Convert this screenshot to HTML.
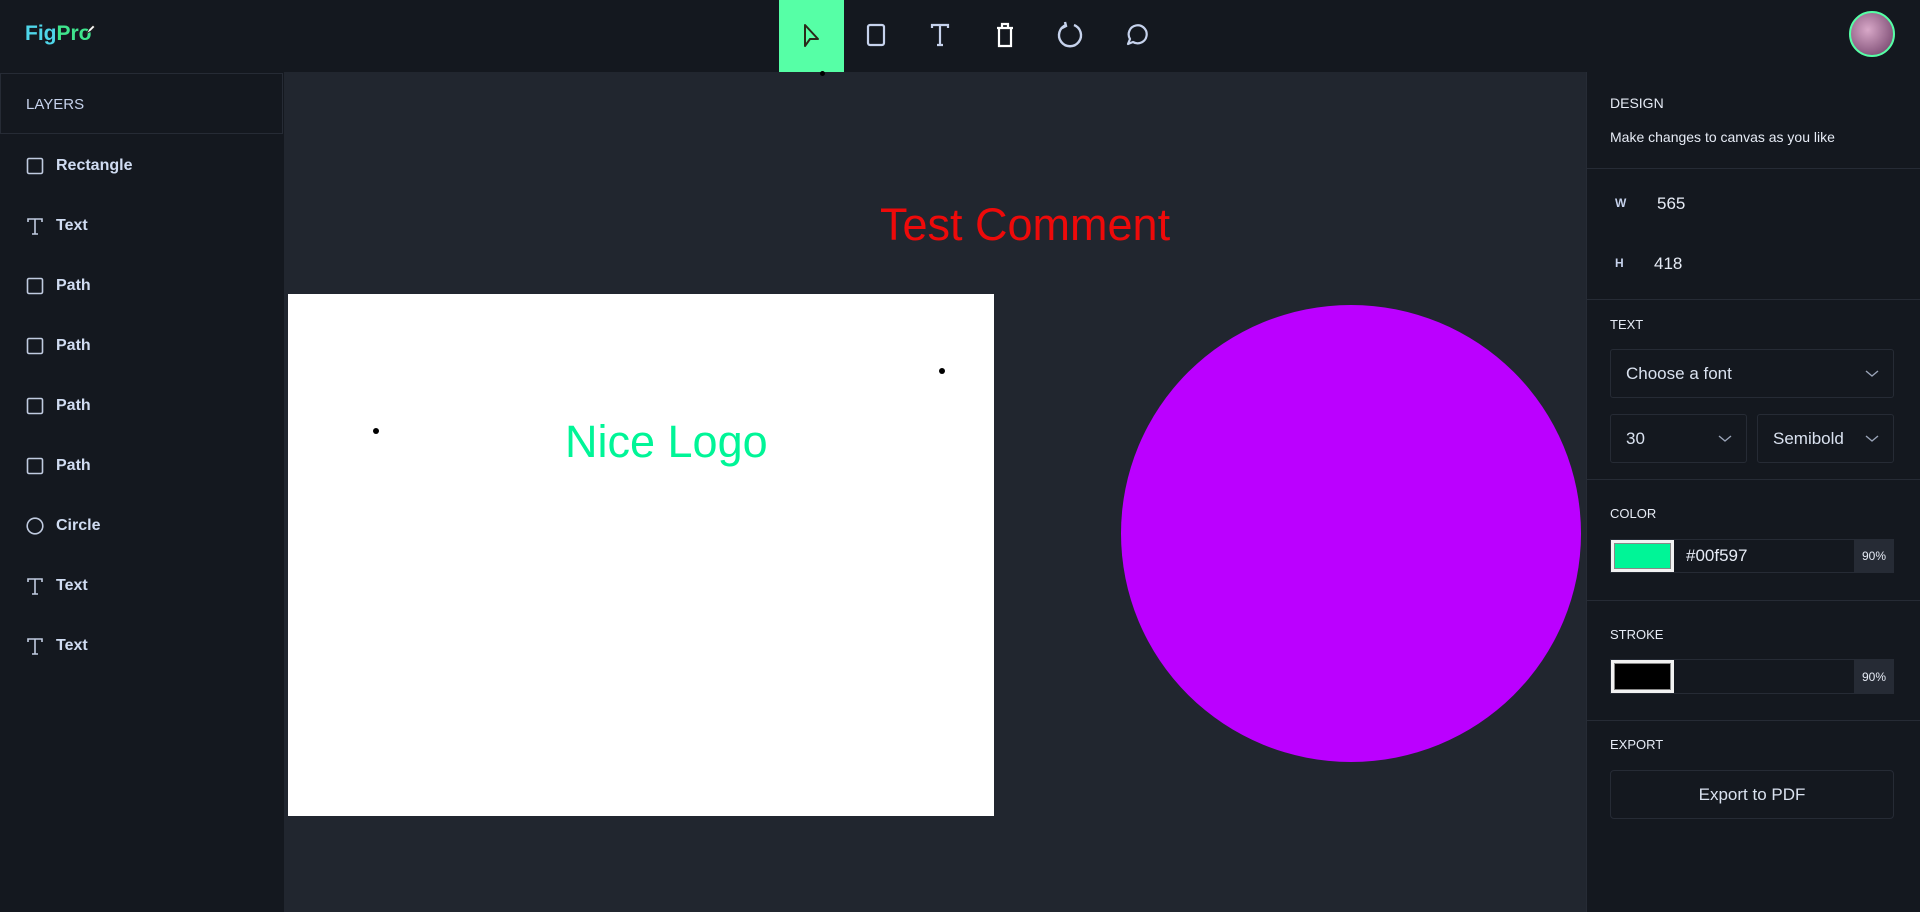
<!DOCTYPE html>
<html><head><meta charset="utf-8"><style>
*{margin:0;padding:0;box-sizing:border-box}
body{width:1920px;height:912px;overflow:hidden;background:#21262f;font-family:"Liberation Sans",Arial,sans-serif;position:relative}
.top{position:absolute;left:0;top:0;width:1920px;height:72px;background:#14181f}
.left{position:absolute;left:0;top:72px;width:284px;height:840px;background:#14181f}
.right{position:absolute;left:1586px;top:72px;width:334px;height:840px;background:#14181f}
.abs{position:absolute}
.lay{position:absolute;left:0;height:60px;display:flex;align-items:center;color:#d0dcf2;font-weight:bold;font-size:16px}
.lay svg{margin-left:26px;margin-right:12px}
.lbl{position:absolute;left:24px;color:#e6ebf5;font-size:13px}
.div{position:absolute;left:0;width:334px;height:1px;background:#262b35}
.sel{position:absolute;border:1px solid #262b35;border-radius:3px;color:#d9e1ef;font-size:17px;display:flex;align-items:center;padding-left:15px}
.sel svg{position:absolute;right:14px}
</style></head><body>
<div class="top">
  <div class="abs" style="left:25px;top:22px;font-size:21px;font-weight:bold;letter-spacing:0"><span style="color:#4fd6ea">Fig</span><span style="color:#3fe58d">Pro</span></div>
  <svg class="abs" style="left:84px;top:22px" width="14" height="14" viewBox="0 0 14 14"><path d="M2 12 L5 7 L9 3 L11 5 L7 9 Z" fill="#fff" stroke="#222" stroke-width="1"/></svg>
  <div class="abs" style="left:779px;top:0;width:65px;height:72px;background:#56ffa6"></div>
  <svg class="abs" style="left:800px;top:22px" width="24" height="28" viewBox="0 0 24 28"><path d="M5 3 L5 24 L10 17 L18 17 Z" fill="none" stroke="#2a2a1a" stroke-width="2" stroke-linejoin="round"/></svg>
  <svg class="abs" style="left:864px;top:22px" width="24" height="26" viewBox="0 0 24 26"><rect x="4" y="3" width="16" height="20" rx="2" fill="none" stroke="#c6d2ec" stroke-width="2.2"/></svg>
  <svg class="abs" style="left:928px;top:22px" width="24" height="26" viewBox="0 0 24 26"><path d="M4 6V3H20V6M12 3V23M9 23H15" fill="none" stroke="#c6d2ec" stroke-width="2.2"/></svg>
  <svg class="abs" style="left:993px;top:21px" width="24" height="28" viewBox="0 0 24 28"><path d="M4 7H20M9 7V3H15V7M6 7V25H18V7" fill="none" stroke="#fff" stroke-width="2.2"/></svg>
  <svg class="abs" style="left:1056px;top:20px" width="28" height="30" viewBox="0 0 28 30"><path d="M10 5 A11 11 0 1 0 18 5" fill="none" stroke="#c6d2ec" stroke-width="2.4"/><path d="M9 2 L10 6 L6 8" fill="none" stroke="#c6d2ec" stroke-width="2.4"/></svg>
  <svg class="abs" style="left:1123px;top:22px" width="26" height="26" viewBox="0 0 26 26"><path d="M5 22 L7 17 A9 9 0 1 1 10 20 Z" fill="none" stroke="#c6d2ec" stroke-width="2.2" stroke-linejoin="round"/></svg>
  <div class="abs" style="left:820px;top:71px;width:5px;height:5px;border-radius:50%;background:#000"></div>
  <div class="abs" style="left:1849px;top:11px;width:46px;height:46px;border-radius:50%;border:2px solid #56ffa6;background:radial-gradient(circle at 40% 40%,#d8a8c8,#8a5a80 70%,#5a3a5a)"></div>
</div>
<div class="left">
  <div class="abs" style="left:0;top:1px;width:283px;height:61px;border:1px solid #262b35;background:#14181f"></div>
  <div class="abs" style="left:26px;top:24px;color:#c6d2ec;font-size:15px">LAYERS</div>
  <div class="lay" style="top:64px"><svg width="18" height="18"><rect x="1.5" y="1.5" width="15" height="15" rx="1.5" fill="none" stroke="#c0cbe0" stroke-width="1.6"/></svg>Rectangle</div>
  <div class="lay" style="top:124px"><svg width="18" height="18"><path d="M2 5V2H16V5M9 2V17M6 17H12" fill="none" stroke="#c0cbe0" stroke-width="1.6"/></svg>Text</div>
  <div class="lay" style="top:184px"><svg width="18" height="18"><rect x="1.5" y="1.5" width="15" height="15" rx="1.5" fill="none" stroke="#c0cbe0" stroke-width="1.6"/></svg>Path</div>
  <div class="lay" style="top:244px"><svg width="18" height="18"><rect x="1.5" y="1.5" width="15" height="15" rx="1.5" fill="none" stroke="#c0cbe0" stroke-width="1.6"/></svg>Path</div>
  <div class="lay" style="top:304px"><svg width="18" height="18"><rect x="1.5" y="1.5" width="15" height="15" rx="1.5" fill="none" stroke="#c0cbe0" stroke-width="1.6"/></svg>Path</div>
  <div class="lay" style="top:364px"><svg width="18" height="18"><rect x="1.5" y="1.5" width="15" height="15" rx="1.5" fill="none" stroke="#c0cbe0" stroke-width="1.6"/></svg>Path</div>
  <div class="lay" style="top:424px"><svg width="18" height="18"><circle cx="9" cy="9" r="7.8" fill="none" stroke="#c0cbe0" stroke-width="1.6"/></svg>Circle</div>
  <div class="lay" style="top:484px"><svg width="18" height="18"><path d="M2 5V2H16V5M9 2V17M6 17H12" fill="none" stroke="#c0cbe0" stroke-width="1.6"/></svg>Text</div>
  <div class="lay" style="top:544px"><svg width="18" height="18"><path d="M2 5V2H16V5M9 2V17M6 17H12" fill="none" stroke="#c0cbe0" stroke-width="1.6"/></svg>Text</div>
</div>
<div class="abs" style="left:880px;top:199px;color:#ee0a0a;font-size:45px;white-space:nowrap">Test Comment</div>
<div class="abs" style="left:288px;top:294px;width:706px;height:522px;background:#fff"></div>
<div class="abs" style="left:565px;top:416px;color:#00f597;font-size:45px;white-space:nowrap">Nice Logo</div>
<div class="abs" style="left:373px;top:428px;width:6px;height:6px;border-radius:50%;background:#000"></div>
<div class="abs" style="left:939px;top:368px;width:6px;height:6px;border-radius:50%;background:#000"></div>
<div class="abs" style="left:1121px;top:305px;width:460px;height:457px;border-radius:50%;background:#bb00ff"></div>
<div class="right">
  <div class="abs" style="left:0;top:0;width:1px;height:840px;background:#262b35"></div>
  <div class="lbl" style="top:23px;font-size:14px">DESIGN</div>
  <div class="lbl" style="top:57px;font-size:14px">Make changes to canvas as you like</div>
  <div class="div" style="top:96px"></div>
  <div class="lbl" style="left:29px;top:124px;font-size:12px;font-weight:bold;color:#c6d2ec">W</div>
  <div class="lbl" style="left:71px;top:122px;font-size:17px">565</div>
  <div class="lbl" style="left:29px;top:184px;font-size:12px;font-weight:bold;color:#c6d2ec">H</div>
  <div class="lbl" style="left:68px;top:182px;font-size:17px">418</div>
  <div class="div" style="top:227px"></div>
  <div class="lbl" style="top:245px;font-size:13px">TEXT</div>
  <div class="sel" style="left:24px;top:277px;width:284px;height:49px">Choose a font<svg width="14" height="8"><path d="M1 1L7 6L13 1" fill="none" stroke="#9aa4b8" stroke-width="1.4"/></svg></div>
  <div class="sel" style="left:24px;top:342px;width:137px;height:49px">30<svg width="14" height="8"><path d="M1 1L7 6L13 1" fill="none" stroke="#9aa4b8" stroke-width="1.4"/></svg></div>
  <div class="sel" style="left:171px;top:342px;width:137px;height:49px">Semibold<svg width="14" height="8"><path d="M1 1L7 6L13 1" fill="none" stroke="#9aa4b8" stroke-width="1.4"/></svg></div>
  <div class="div" style="top:407px"></div>
  <div class="lbl" style="top:434px;font-size:13px">COLOR</div>
  <div class="abs" style="left:24px;top:467px;width:284px;height:34px;border:1px solid #262b35"></div>
  <div class="abs" style="left:25px;top:468px;width:63px;height:32px;background:#f2f2f2;padding:3px"><div style="width:100%;height:100%;background:#00f597;border:1px solid #888"></div></div>
  <div class="lbl" style="left:100px;top:474px;font-size:17px">#00f597</div>
  <div class="abs" style="left:268px;top:468px;width:40px;height:32px;background:#262b35;color:#e6ebf5;font-size:12px;display:flex;align-items:center;justify-content:center">90%</div>
  <div class="div" style="top:528px"></div>
  <div class="lbl" style="top:555px;font-size:13px">STROKE</div>
  <div class="abs" style="left:24px;top:587px;width:284px;height:35px;border:1px solid #262b35"></div>
  <div class="abs" style="left:25px;top:588px;width:63px;height:33px;background:#f2f2f2;padding:3px"><div style="width:100%;height:100%;background:#000;border:1px solid #888"></div></div>
  <div class="abs" style="left:268px;top:588px;width:40px;height:33px;background:#262b35;color:#e6ebf5;font-size:12px;display:flex;align-items:center;justify-content:center">90%</div>
  <div class="div" style="top:648px"></div>
  <div class="lbl" style="top:665px;font-size:13px">EXPORT</div>
  <div class="abs" style="left:24px;top:698px;width:284px;height:49px;border:1px solid #262b35;border-radius:4px;color:#d9e1ef;font-size:17px;display:flex;align-items:center;justify-content:center">Export to PDF</div>
</div>
</body></html>
